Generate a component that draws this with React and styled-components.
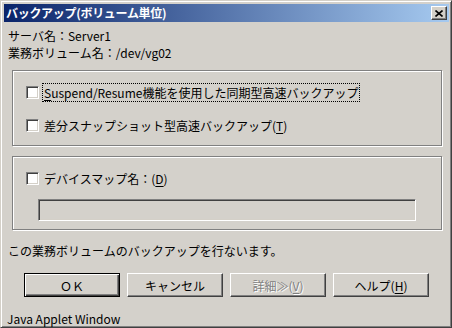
import styled, { createGlobalStyle } from "styled-components";

const GlobalStyle = createGlobalStyle`
  html, body {
    margin: 0;
    padding: 0;
    background: #d4d1cb;
  }
  * {
    box-sizing: border-box;
  }
`;

const FONT = `"Noto Sans CJK JP", "Noto Sans", sans-serif`;

const Window = styled.div`
  width: 452px;
  height: 328px;
  display: flex;
  flex-direction: column;
  padding: 3px 2px 0 3px;
  background: #d4d1cb;
  border: 1px solid;
  border-color: #d4d0c8 #404040 #404040 #d4d0c8;
  box-shadow: inset 1px 1px 0 #fff, inset -1px -1px 0 #808080;
  font-family: ${FONT};
  font-size: 12px;
  color: #000;
  overflow: hidden;
`;

const TitleBar = styled.div`
  height: 18px;
  display: flex;
  align-items: center;
  padding: 0 2px 0 2px;
  background: linear-gradient(to right, #0a246a, #a6caf0);
`;

const Title = styled.span`
  color: #fff;
  font-weight: bold;
  font-size: 12px;
  line-height: 18px;
  letter-spacing: -0.3px;
`;

const CloseButton = styled.div`
  margin-left: auto;
  width: 16px;
  height: 14px;
  display: flex;
  align-items: center;
  justify-content: center;
  background: #d4d0c8;
  border: 1px solid;
  border-color: #fff #404040 #404040 #fff;
  box-shadow: inset -1px -1px 0 #808080;
`;

const Info = styled.div`
  margin: 5px 0 0 4px;
  line-height: 17px;
`;

const Group = styled.div`
  margin: ${(p) => p.$top}px 8px 0 8px;
  width: 430px;
  padding: 12px 0 ${(p) => p.$bottom}px 13px;
  border: 1px solid #808080;
  box-shadow: 1px 1px 0 #fff, inset 1px 1px 0 #fff;
  display: flex;
  flex-direction: column;
`;

const CheckRow = styled.div`
  height: 19px;
  display: flex;
  align-items: center;
  gap: 3px;
  margin-bottom: ${(p) => p.$gap || 0}px;
`;

const Box = styled.span`
  width: 13px;
  height: 13px;
  flex: none;
  background: #fff;
  border: 1px solid;
  border-color: #808080 #fff #fff #808080;
  box-shadow: inset 1px 1px 0 #404040, inset -1px -1px 0 #d4d0c8;
`;

const Label = styled.span`
  line-height: 17px;
  padding: 0 1px;
  border: 1px dotted ${(p) => (p.$focused ? "#000" : "transparent")};
  white-space: nowrap;
`;

const Key = styled.span`
  text-decoration: underline;
  text-underline-offset: 2px;
`;

const Field = styled.div`
  margin: 11px 0 0 12px;
  width: 378px;
  height: 22px;
  background: #d4d1cb;
  border: 1px solid;
  border-color: #808080 #fff #fff #808080;
  box-shadow: inset 1px 1px 0 #404040, inset -1px -1px 0 #d4d0c8;
`;

const Message = styled.div`
  margin: 12px 0 0 4px;
  line-height: 17px;
`;

const ButtonRow = styled.div`
  display: flex;
  gap: 7px;
  margin: 14px 0 0 20px;
`;

const Button = styled.div`
  width: 96px;
  height: 24px;
  display: flex;
  align-items: center;
  justify-content: center;
  background: #d4d1cb;
  border: 1px solid;
  border-color: ${(p) => (p.$default ? "#000" : "#fff #404040 #404040 #fff")};
  box-shadow: ${(p) =>
    p.$default
      ? "inset 1px 1px 0 #fff, inset -1px -1px 0 #404040, inset -2px -2px 0 #808080"
      : "inset -1px -1px 0 #808080"};
  color: ${(p) => (p.$disabled ? "#808080" : "#000")};
  text-shadow: ${(p) => (p.$disabled ? "1px 1px 0 #fff" : "none")};
  line-height: 17px;
  white-space: nowrap;
`;

const Footer = styled.div`
  margin: 13px 0 0 3px;
  line-height: 17px;
`;

export default function App() {
  return (
    <>
      <GlobalStyle />
      <Window>
        <TitleBar>
          <Title>バックアップ(ボリューム単位)</Title>
          <CloseButton>
            <svg width="8" height="7" viewBox="0 0 8 7">
              <path d="M0.5 0.5 L7.5 6.5 M7.5 0.5 L0.5 6.5" stroke="#000" strokeWidth="1.6" />
            </svg>
          </CloseButton>
        </TitleBar>

        <Info>
          <div>サーバ名：Server1</div>
          <div>業務ボリューム名：/dev/vg02</div>
        </Info>

        <Group $top={9} $bottom={10}>
          <CheckRow $gap={14}>
            <Box />
            <Label $focused>
              <Key>S</Key>uspend/Resume機能を使用した同期型高速バックアップ
            </Label>
          </CheckRow>
          <CheckRow>
            <Box />
            <Label>
              差分スナップショット型高速バックアップ(<Key>T</Key>)
            </Label>
          </CheckRow>
        </Group>

        <Group $top={10} $bottom={8}>
          <CheckRow>
            <Box />
            <Label>
              デバイスマップ名：(<Key>D</Key>)
            </Label>
          </CheckRow>
          <Field />
        </Group>

        <Message>この業務ボリュームのバックアップを行ないます。</Message>

        <ButtonRow>
          <Button $default>ＯＫ</Button>
          <Button>キャンセル</Button>
          <Button $disabled>
            詳細≫(<Key>V</Key>)
          </Button>
          <Button>
            ヘルプ(<Key>H</Key>)
          </Button>
        </ButtonRow>

        <Footer>Java Applet Window</Footer>
      </Window>
    </>
  );
}
